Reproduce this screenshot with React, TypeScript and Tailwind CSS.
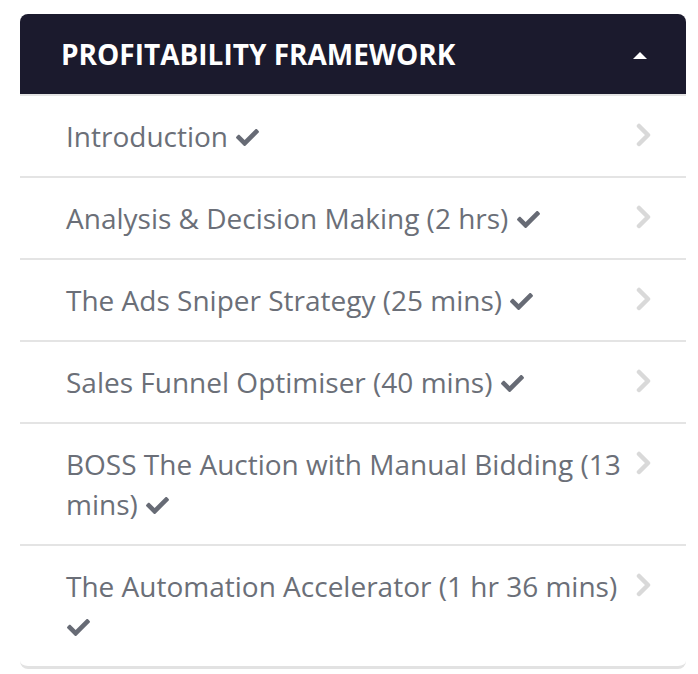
import React from "react";

const lessons = [
  "Introduction",
  "Analysis & Decision Making (2 hrs)",
  "The Ads Sniper Strategy (25 mins)",
  "Sales Funnel Optimiser (40 mins)",
  "BOSS The Auction with Manual Bidding (13 mins)",
  "The Automation Accelerator (1 hr 36 mins)",
];

const Check = () => (
  <svg
    viewBox="0 0 512 512"
    className="inline-block w-[23px] h-[23px] ml-[1px] align-[-2px] fill-[#676b75]"
  >
    <path d="M173.9 439.4 7.5 273c-10-10-10-26.2 0-36.2l36.2-36.2c10-10 26.2-10 36.2 0L192 312.7 432.1 72.6c10-10 26.2-10 36.2 0l36.2 36.2c10 10 10 26.2 0 36.2L210.1 439.4c-10 10-26.2 10-36.2 0z" />
  </svg>
);

const Chevron = () => (
  <svg viewBox="0 0 16 24" className="w-[16px] h-[24px] mt-[7px] shrink-0">
    <path
      d="M3 3l9 9-9 9"
      fill="none"
      stroke="#d9d9d9"
      strokeWidth="4.5"
      strokeLinecap="round"
      strokeLinejoin="round"
    />
  </svg>
);

const App = () => {
  return (
    <div className="w-[698px] h-[674px] bg-white pt-[14px] pl-[20px] pr-[12px] font-['Open_Sans',sans-serif]">
      <div className="rounded-[8px] border-b-[3px] border-[#e2e2e2] bg-white">
        <div className="h-[80px] bg-[#1b1a2d] rounded-t-[8px] flex items-center justify-between pl-[41px] pr-[38px]">
          <h2 className="text-white text-[28px] leading-[36px] font-bold">
            PROFITABILITY FRAMEWORK
          </h2>
          <svg viewBox="0 0 16 8" className="w-[16px] h-[8px] mt-[2px]">
            <path d="M1 8L8 1l7 7z" fill="#ffffff" />
          </svg>
        </div>
        {/* lesson list */}
        <ul className="border-t-[2px] border-[#e4e4e4]">
          {lessons.map((title, i) => (
            <li
              key={title}
              className={
                "flex items-start justify-between pl-[46px] pr-[34px] pt-[20px] pb-[20px] " +
                (i < lessons.length - 1 ? "border-b-[2px] border-[#e4e4e4]" : "")
              }
            >
              <span className="text-[28px] leading-[40px] text-[#6b6f78] w-[562px]">
                {title} <Check />
              </span>
              <Chevron />
            </li>
          ))}
        </ul>
      </div>
    </div>
  );
};

export default App;
